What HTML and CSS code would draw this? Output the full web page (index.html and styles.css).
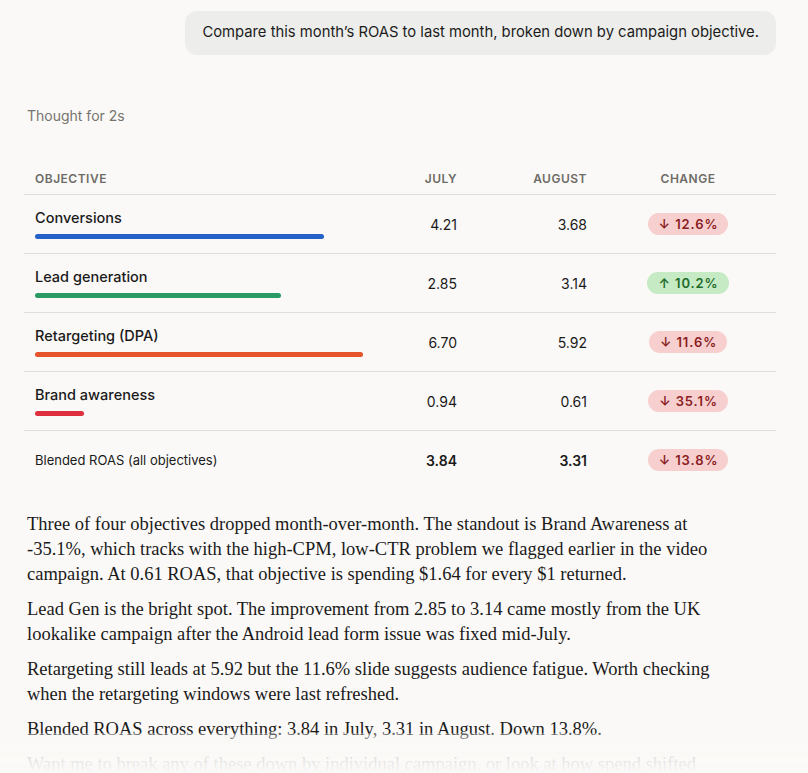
FILE: index.html
```html
<!DOCTYPE html>
<html lang="en">
<head>
<meta charset="utf-8">
<title>ROAS comparison</title>
<link rel="stylesheet" href="styles.css">
</head>
<body>
<main class="chat">
  <div class="user-row">
    <div class="bubble">Compare this month’s ROAS to last month, broken down by campaign objective.</div>
  </div>

  <div class="thought">Thought for 2s</div>

  <div class="table">
    <div class="row head">
      <div class="cell obj">Objective</div>
      <div class="cell num">July</div>
      <div class="cell num">August</div>
      <div class="cell chg">Change</div>
    </div>

    <div class="row">
      <div class="cell obj">
        <div class="label">Conversions</div>
        <div class="bar blue" style="width:289px"></div>
      </div>
      <div class="cell num">4.21</div>
      <div class="cell num">3.68</div>
      <div class="cell chg"><span class="badge down">↓ 12.6%</span></div>
    </div>

    <div class="row">
      <div class="cell obj">
        <div class="label">Lead generation</div>
        <div class="bar green" style="width:246px"></div>
      </div>
      <div class="cell num">2.85</div>
      <div class="cell num">3.14</div>
      <div class="cell chg"><span class="badge up">↑ 10.2%</span></div>
    </div>

    <div class="row">
      <div class="cell obj">
        <div class="label">Retargeting (DPA)</div>
        <div class="bar orange" style="width:328px"></div>
      </div>
      <div class="cell num">6.70</div>
      <div class="cell num">5.92</div>
      <div class="cell chg"><span class="badge down">↓ 11.6%</span></div>
    </div>

    <div class="row">
      <div class="cell obj">
        <div class="label">Brand awareness</div>
        <div class="bar red" style="width:49px"></div>
      </div>
      <div class="cell num">0.94</div>
      <div class="cell num">0.61</div>
      <div class="cell chg"><span class="badge down">↓ 35.1%</span></div>
    </div>

    <div class="row total">
      <div class="cell obj">Blended ROAS (all objectives)</div>
      <div class="cell num">3.84</div>
      <div class="cell num">3.31</div>
      <div class="cell chg"><span class="badge down">↓ 13.8%</span></div>
    </div>
  </div>

  <div class="prose">
    <p>Three of four objectives dropped month-over-month. The standout is Brand Awareness at -35.1%, which tracks with the high-CPM, low-CTR problem we flagged earlier in the video campaign. At 0.61 ROAS, that objective is spending $1.64 for every $1 returned.</p>
    <p>Lead Gen is the bright spot. The improvement from 2.85 to 3.14 came mostly from the UK lookalike campaign after the Android lead form issue was fixed mid-July.</p>
    <p>Retargeting still leads at 5.92 but the 11.6% slide suggests audience fatigue. Worth checking when the retargeting windows were last refreshed.</p>
    <p>Blended ROAS across everything: 3.84 in July, 3.31 in August. Down 13.8%.</p>
    <p>Want me to break any of these down by individual campaign, or look at how spend shifted between objectives?</p>
  </div>
</main>
<div class="fade"></div>
</body>
</html>
```

FILE: styles.css
```css
html, body {
  margin: 0;
  padding: 0;
  background: #faf9f7;
  height: 100%;
  overflow: hidden;
}
body {
  font-family: Inter, "Noto Sans", sans-serif;
  color: #1a1a1a;
}
.chat {
  padding: 11px 32px 0 24px;
}
.user-row {
  display: flex;
  justify-content: flex-end;
}
.bubble {
  background: #ededeb;
  border-radius: 12px;
  padding: 11px 17px 12px;
  font-size: 14.8px;
  line-height: 21px;
  color: #1c1c1c;
}
.thought {
  margin-top: 52px;
  margin-left: 3px;
  font-size: 14px;
  line-height: 18px;
  color: #76746f;
}
.table {
  margin-top: 40px;
}
.row {
  display: grid;
  grid-template-columns: 1fr 90px 130px 176px;
  align-items: center;
  min-height: 58px;
  border-bottom: 1px solid #dfdedb;
}
.row.head {
  min-height: 0;
  padding: 6px 0 8px;
  font-size: 12px;
  font-weight: 600;
  letter-spacing: 0.5px;
  text-transform: uppercase;
  color: #6d6b66;
}
.row.total {
  border-bottom: none;
}
.cell.obj {
  padding-left: 11px;
}
.cell.num {
  text-align: right;
  padding-right: 13px;
  font-size: 14px;
}
.cell.chg {
  text-align: center;
}
.head .cell.num,
.head .cell.chg {
  font-size: 12px;
}
.label {
  font-size: 14.5px;
  font-weight: 500;
  line-height: 18px;
}
.bar {
  height: 5px;
  border-radius: 3px;
  margin-top: 7px;
}
.blue { background: #2461c8; }
.green { background: #2a9b64; }
.orange { background: #e5542b; }
.red { background: #dd2f3d; }
.total .cell.obj {
  font-size: 13px;
}
.total .cell.num {
  font-weight: 600;
}
.badge {
  display: inline-block;
  padding: 3px 10px 3px 11px;
  border-radius: 11px;
  font-size: 13px;
  line-height: 16px;
  font-weight: 600;
  letter-spacing: 0.9px;
}
.badge.down {
  background: #f7cfcf;
  color: #8a1c22;
}
.badge.up {
  background: #c6eac3;
  color: #1e6a2a;
}
.prose {
  margin-top: 23px;
  margin-left: 3px;
  max-width: 686px;
  font-family: "Liberation Serif", serif;
  font-size: 18.5px;
  line-height: 25px;
  color: #1a1a1a;
}
.prose p {
  margin: 0 0 10px;
}
.fade {
  position: fixed;
  left: 0;
  right: 0;
  bottom: 0;
  height: 40px;
  background: linear-gradient(to bottom, rgba(250,249,247,0.3), rgba(250,249,247,0.85) 50%, #faf9f7);
  pointer-events: none;
}
```
